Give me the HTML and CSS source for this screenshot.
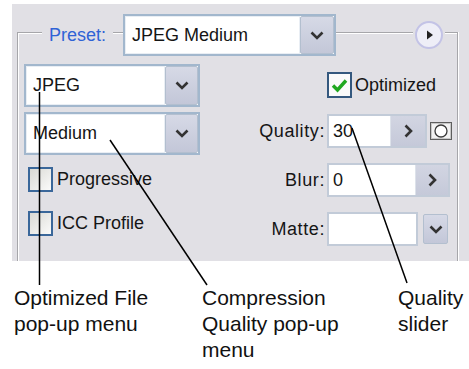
FILE: index.html
```html
<!DOCTYPE html>
<html>
<head>
<meta charset="utf-8">
<link rel="stylesheet" href="styles.css">
</head>
<body>
<div class="page">
  <div class="panel">
    <div class="frame">
      <div class="header">
        <span class="legend">Preset:</span>
        <div class="select preset">
          <div class="field">JPEG Medium</div>
          <div class="btn"><svg width="14" height="9" viewBox="0 0 14 9"><polyline points="1.5,1.5 7,7 12.5,1.5" fill="none" stroke="#333" stroke-width="2.6"/></svg></div>
        </div>
        <div class="spacer"></div>
        <div class="flyout-wrap">
          <div class="flyout"><svg width="8" height="10" viewBox="0 0 8 10"><polygon points="1,0.5 7,5 1,9.5" fill="#222"/></svg></div>
        </div>
      </div>
      <div class="body">
        <div class="leftcol">
          <div class="select">
            <div class="field">JPEG</div>
            <div class="btn"><svg width="14" height="9" viewBox="0 0 14 9"><polyline points="1.5,1.5 7,7 12.5,1.5" fill="none" stroke="#333" stroke-width="2.6"/></svg></div>
          </div>
          <div class="select second">
            <div class="field">Medium</div>
            <div class="btn"><svg width="14" height="9" viewBox="0 0 14 9"><polyline points="1.5,1.5 7,7 12.5,1.5" fill="none" stroke="#333" stroke-width="2.6"/></svg></div>
          </div>
          <div class="check-row first-check"><span class="box"></span><span>Progressive</span></div>
          <div class="check-row second-check"><span class="box"></span><span>ICC Profile</span></div>
        </div>
        <div class="rightcol">
          <div class="opt-row"><span class="box checked"><svg width="19" height="17" viewBox="0 0 19 17"><polyline points="3,8.5 7.5,13 16,3.5" fill="none" stroke="#1fa71f" stroke-width="3.4"/></svg></span><span>Optimized</span></div>
          <div class="lbl">Quality:</div>
          <div class="ctrl">
            <div class="spin quality">
              <div class="field">30</div>
              <div class="btn"><svg width="9" height="14" viewBox="0 0 9 14"><polyline points="1.5,1.5 7,7 1.5,12.5" fill="none" stroke="#333" stroke-width="2.6"/></svg></div>
            </div>
            <svg class="mini" width="22" height="18" viewBox="0 0 22 18"><rect x="0.5" y="0.5" width="21" height="17" fill="#f2f2f2" stroke="#5e5e5e"/><rect x="1.5" y="1.5" width="19" height="15" fill="none" stroke="#c8c8c8"/><circle cx="11" cy="9" r="6" fill="#fff" stroke="#3a3a3a" stroke-width="1.3"/></svg>
          </div>
          <div class="lbl">Blur:</div>
          <div class="ctrl">
            <div class="spin blur">
              <div class="field">0</div>
              <div class="btn"><svg width="9" height="14" viewBox="0 0 9 14"><polyline points="1.5,1.5 7,7 1.5,12.5" fill="none" stroke="#333" stroke-width="2.6"/></svg></div>
            </div>
          </div>
          <div class="lbl">Matte:</div>
          <div class="ctrl">
            <div class="matte-field"></div>
            <div class="matte-btn"><svg width="14" height="9" viewBox="0 0 14 9"><polyline points="1.5,1.5 7,7 12.5,1.5" fill="none" stroke="#333" stroke-width="2.6"/></svg></div>
          </div>
        </div>
      </div>
    </div>
  </div>
  <div class="captions">
    <div class="cap">Optimized File<br>pop-up menu</div>
    <div class="cap">Compression<br>Quality pop-up<br>menu</div>
    <div class="cap">Quality<br>slider</div>
  </div>
  <svg class="callouts" width="469" height="369" viewBox="0 0 469 369">
    <line x1="39.5" y1="92" x2="39.5" y2="285" stroke="#000" stroke-width="1.5"/>
    <line x1="110" y1="140" x2="207" y2="285" stroke="#000" stroke-width="1.5"/>
    <line x1="352" y1="128" x2="407" y2="283" stroke="#000" stroke-width="1.5"/>
  </svg>
</div>
</body>
</html>
```
FILE: styles.css
```css
html, body {
  margin: 0;
  padding: 0;
  background: #fff;
}
.page {
  position: relative;
  width: 469px;
  height: 369px;
  overflow: hidden;
  font-family: "Liberation Sans", Arial, sans-serif;
  font-size: 18px;
  color: #151515;
}
.panel {
  margin: 4px 0 0 12px;
  height: 257px;
  background: #e1e0e5;
  overflow: hidden;
  padding-top: 28px;
  box-sizing: border-box;
}
.frame {
  margin: 0 11px 0 5px;
  height: 300px;
  border: 1px solid #a6a6aa;
  border-bottom: none;
  box-shadow: inset 1px 1px 0 #fff, 1px 0 0 #fff;
}
.header {
  display: flex;
  align-items: center;
  height: 42px;
  margin-top: -19px;
}
.legend {
  margin-left: 24px;
  padding: 0 7px;
  background: #e1e0e5;
  color: #2f63d6;
  line-height: 20px;
}
.select {
  display: flex;
  height: 43px;
  box-sizing: border-box;
  border: 2px solid #a2b7cd;
  background: #fff;
}
.select.preset {
  margin-left: 10px;
  width: 213px;
  height: 42px;
}
.field {
  flex: 1;
  display: flex;
  align-items: center;
  padding-left: 6px;
  background: #fff;
  border: 1px solid #e9eef4;
}
.btn {
  width: 31px;
  display: flex;
  align-items: center;
  justify-content: center;
  background: linear-gradient(#d6d9e6, #c3c7d8);
  border: 1px solid #b3bfcf;
  border-radius: 2px;
}
.preset .btn {
  width: 32px;
}
.spacer {
  flex: 1;
}
.flyout-wrap {
  background: #e1e0e5;
  padding: 0 2px;
  margin-right: 12px;
}
.flyout {
  width: 24px;
  height: 24px;
  border-radius: 50%;
  border: 2px solid #c3c3e6;
  background: #eeeef7;
  display: flex;
  align-items: center;
  justify-content: center;
}
.flyout svg {
  margin-left: 2px;
}
.body {
  display: flex;
}
.leftcol {
  margin-left: 6px;
  margin-top: 8px;
  width: 176px;
  display: flex;
  flex-direction: column;
}
.select.second {
  margin-top: 5px;
}
.check-row {
  display: flex;
  align-items: center;
  gap: 4px;
}
.first-check {
  margin-top: 12px;
  margin-left: 4px;
}
.second-check {
  margin-top: 19px;
  margin-left: 4px;
}
.box {
  width: 25px;
  height: 25px;
  box-sizing: border-box;
  border: 2px solid #3a679a;
  background: linear-gradient(135deg, #d9d9d4, #fbfbfa);
  display: flex;
  align-items: center;
  justify-content: center;
}
.box.checked {
  width: 25px;
  height: 26px;
  border-color: #34587e;
  background: #fafafa;
}
.rightcol {
  flex: 1;
  display: grid;
  grid-template-columns: 125px auto;
  column-gap: 2px;
  row-gap: 15px;
  margin-top: 16px;
  align-items: center;
  align-content: start;
}
.opt-row {
  grid-column: 1 / span 2;
  display: flex;
  align-items: center;
  gap: 3px;
  height: 26px;
  padding-left: 127px;
  margin-bottom: 1px;
}
.lbl {
  justify-self: end;
  letter-spacing: 0.6px;
}
.ctrl {
  display: flex;
  align-items: center;
  height: 34px;
}
.spin {
  display: flex;
  height: 34px;
  box-sizing: border-box;
  border: 2px solid #c2cbd8;
  background: #fff;
}
.spin .field {
  border: none;
  padding-left: 4px;
}
.spin .btn {
  width: 34px;
  border: none;
  border-left: 1px solid #dde2ea;
  border-radius: 0;
  background: linear-gradient(#d2d5e2, #c5c9d9);
}
.spin.quality {
  width: 100px;
}
.spin.blur {
  width: 123px;
}
.spin.blur .btn {
  width: 32px;
}
.mini {
  margin-left: 3px;
  display: block;
}
.matte-field {
  width: 91px;
  height: 34px;
  box-sizing: border-box;
  border: 2px solid #c2cbd8;
  background: #fff;
}
.matte-btn {
  margin-left: 5px;
  width: 25px;
  height: 30px;
  box-sizing: border-box;
  border: 1px solid #b3bfcf;
  border-radius: 2px;
  background: linear-gradient(#d6d9e6, #c3c7d8);
  display: flex;
  align-items: center;
  justify-content: center;
}
.captions {
  display: grid;
  grid-template-columns: 188px 196px auto;
  padding-left: 14px;
  margin-top: 24px;
  font-size: 21px;
  line-height: 26px;
  color: #111;
}
.callouts {
  position: absolute;
  left: 0;
  top: 0;
  pointer-events: none;
}
```
